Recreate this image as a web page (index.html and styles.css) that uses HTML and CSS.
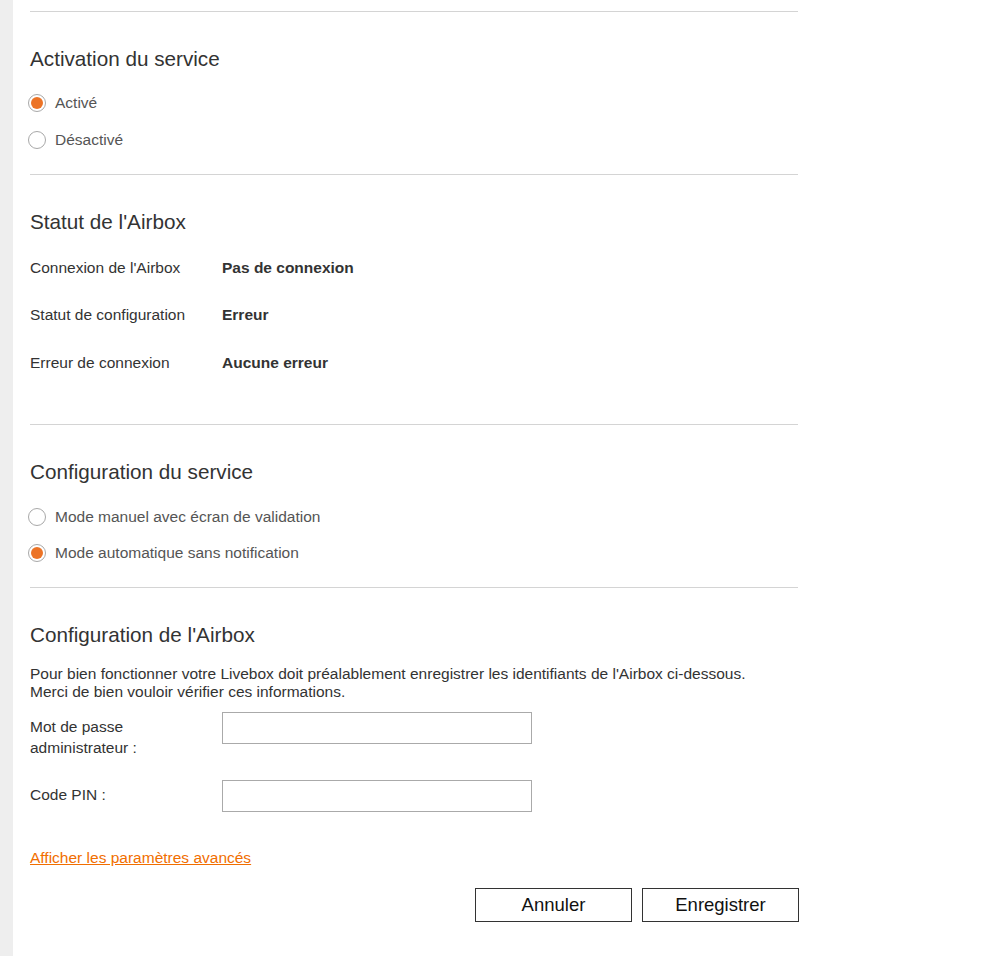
FILE: index.html
```html
<!DOCTYPE html>
<html lang="fr">
<head>
    <meta charset="UTF-8">
    <meta name="viewport" content="width=device-width, initial-scale=1.0">
    <title>Airbox</title>
    <link rel="stylesheet" href="styles.css">
</head>
<body>
    <div class="page">
        <div class="sidebar"></div>
        <div class="contenu">

            <section class="bloc bloc-activation">
                <h2>Activation du service</h2>
                <label class="choix">
                    <input type="radio" name="activation" checked>
                    <span>Activé</span>
                </label>
                <label class="choix">
                    <input type="radio" name="activation">
                    <span>Désactivé</span>
                </label>
            </section>

            <section class="bloc bloc-statut">
                <h2>Statut de l'Airbox</h2>
                <div class="ligne-statut">
                    <span class="libelle">Connexion de l'Airbox</span>
                    <span class="valeur">Pas de connexion</span>
                </div>
                <div class="ligne-statut">
                    <span class="libelle">Statut de configuration</span>
                    <span class="valeur">Erreur</span>
                </div>
                <div class="ligne-statut">
                    <span class="libelle">Erreur de connexion</span>
                    <span class="valeur">Aucune erreur</span>
                </div>
            </section>

            <section class="bloc bloc-config">
                <h2>Configuration du service</h2>
                <label class="choix">
                    <input type="radio" name="mode">
                    <span>Mode manuel avec écran de validation</span>
                </label>
                <label class="choix">
                    <input type="radio" name="mode" checked>
                    <span>Mode automatique sans notification</span>
                </label>
            </section>

            <section class="bloc bloc-airbox">
                <h2>Configuration de l'Airbox</h2>
                <p class="explication">
                    Pour bien fonctionner votre Livebox doit préalablement enregistrer les identifiants de l'Airbox ci-dessous.<br>
                    Merci de bien vouloir vérifier ces informations.
                </p>
                <div class="champ">
                    <label for="mdp">Mot de passe<br>administrateur :</label>
                    <input type="password" id="mdp">
                </div>
                <div class="champ">
                    <label for="pin">Code PIN :</label>
                    <input type="text" id="pin">
                </div>
                <a href="#" class="lien-avance">Afficher les paramètres avancés</a>
                <div class="actions">
                    <button type="button">Annuler</button>
                    <button type="button">Enregistrer</button>
                </div>
            </section>

        </div>
    </div>
</body>
</html>
```

FILE: styles.css
```css
body {
    margin: 0;
    font-family: 'Liberation Sans', Arial, sans-serif;
    background-color: #fff;
    color: #333;
}

.page {
    display: flex;
    min-height: 956px;
}

.sidebar {
    width: 13px;
    background-color: #eeeeee;
    flex-shrink: 0;
}

.contenu {
    width: 768px;
    margin-left: 17px;
    padding-top: 11px;
}

.bloc {
    border-top: 1px solid #d4d4d4;
    padding-top: 35px;
}

.bloc h2 {
    margin: 0;
    font-size: 20.7px;
    font-weight: normal;
    line-height: 24px;
    color: #333;
}

.bloc-activation {
    padding-bottom: 16px;
}

.bloc-activation h2 {
    margin-bottom: 13px;
}

.bloc-config {
    padding-bottom: 16px;
}

.bloc-config h2 {
    margin-bottom: 15px;
}

/* boutons radio */
.choix {
    display: flex;
    align-items: center;
    height: 37px;
    font-size: 15.5px;
    color: #555;
    cursor: pointer;
}

.bloc-config .choix {
    height: 36px;
}

.choix input {
    appearance: none;
    -webkit-appearance: none;
    width: 18px;
    height: 18px;
    margin: 0 9px 0 -2px;
    border: 1px solid #a8a8a8;
    border-radius: 50%;
    background-color: #fff;
    position: relative;
    flex-shrink: 0;
}

.choix input:checked::after {
    content: '';
    position: absolute;
    top: 2px;
    left: 2px;
    width: 12px;
    height: 12px;
    border-radius: 50%;
    background-color: #ec7326;
}

/* statut */
.bloc-statut {
    padding-bottom: 37px;
}

.bloc-statut h2 {
    margin-bottom: 10px;
}

.ligne-statut {
    display: flex;
    align-items: center;
    height: 47.5px;
    font-size: 15.5px;
}

.libelle {
    width: 192px;
    color: #333;
}

.valeur {
    font-weight: bold;
    color: #333;
}

/* configuration airbox */
.bloc-airbox h2 {
    margin-bottom: 18px;
}

.explication {
    margin: 0 0 11px 0;
    font-size: 15.5px;
    line-height: 18px;
    color: #333;
}

.champ {
    display: flex;
    align-items: flex-start;
    margin-bottom: 22px;
}

.champ label {
    width: 192px;
    padding-top: 4px;
    font-size: 15.5px;
    line-height: 21px;
    color: #333;
}

.champ input {
    width: 310px;
    height: 32px;
    box-sizing: border-box;
    margin: 0;
    border: 1px solid #aaa;
    font-size: 15px;
    padding: 0 6px;
}

.lien-avance {
    display: inline-block;
    margin-top: 15px;
    font-size: 15.5px;
    line-height: 18px;
    color: #f16e00;
}

.actions {
    display: flex;
    justify-content: flex-end;
    gap: 10px;
    margin-top: 21px;
    margin-right: -1px;
}

.actions button {
    width: 157px;
    height: 34px;
    background-color: #fff;
    border: 1px solid #333;
    font-family: 'Liberation Sans', Arial, sans-serif;
    font-size: 18.5px;
    color: #111;
    cursor: pointer;
}

.actions button:hover {
    background-color: #f4f4f4;
}
```
